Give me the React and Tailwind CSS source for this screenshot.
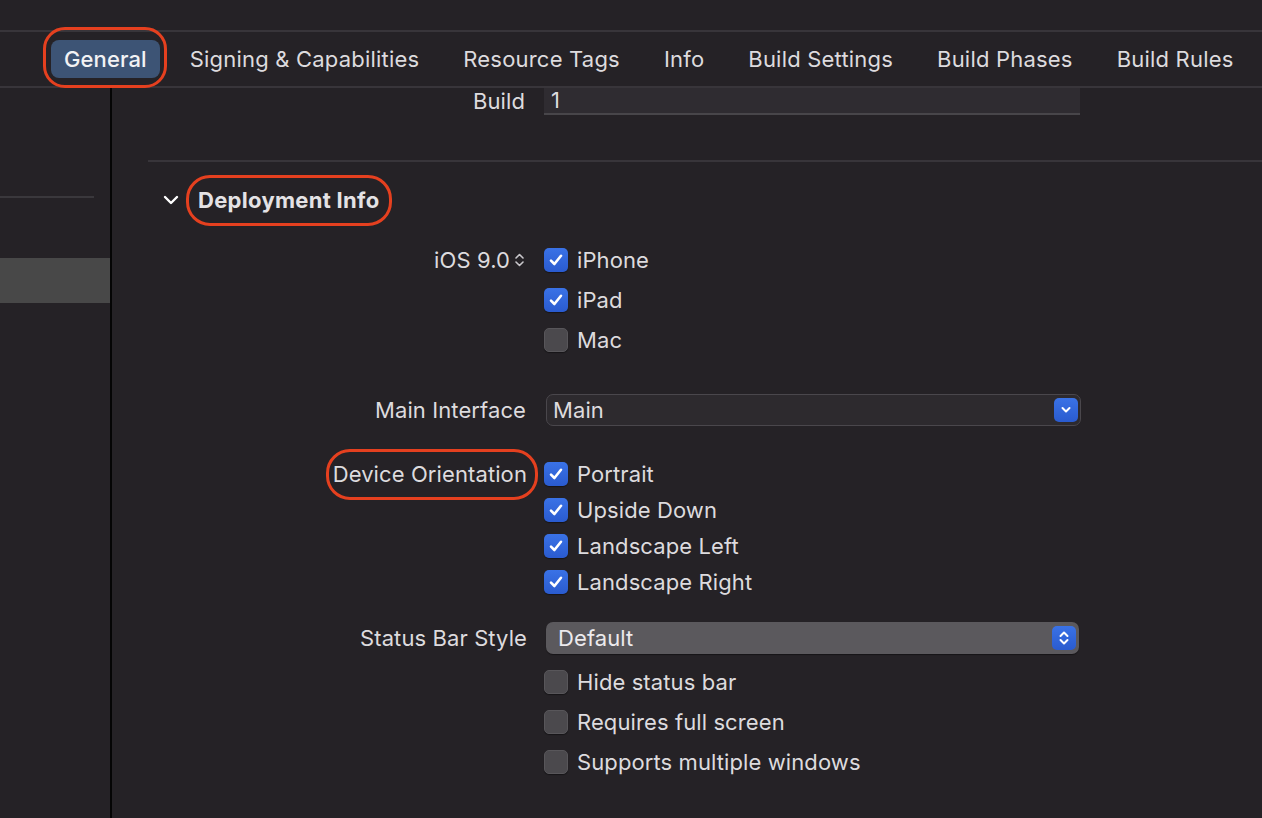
import React from "react";

const FONT = { fontFamily: "Inter, 'Noto Sans', 'Liberation Sans', sans-serif", letterSpacing: "0.1px" };

function Check({ on }) {
  if (on) {
    return (
      <div className="w-[24px] h-[24px] rounded-[5px] bg-gradient-to-b from-[#3a72e6] to-[#2a5bcf] flex items-center justify-center shrink-0 shadow-[0_1px_1px_rgba(0,0,0,0.4)]">
        <svg width="16" height="16" viewBox="0 0 16 16">
          <path d="M3 8.6 L6.4 12 L13 3.8" fill="none" stroke="#ffffff" strokeWidth="2.6" strokeLinecap="round" strokeLinejoin="round" />
        </svg>
      </div>
    );
  }
  return (
    <div className="w-[24px] h-[24px] rounded-[5px] bg-[#4b494d] border border-[#58565a] shrink-0 shadow-[0_1px_1px_rgba(0,0,0,0.4)]" />
  );
}

function CheckRow({ on, label, h = "h-[40px]" }) {
  return (
    <div className={`flex items-center ${h}`}>
      <div className="w-[432px]" />
      <Check on={on} />
      <span className="ml-[9px] text-[22px] text-[#dddbde]">{label}</span>
    </div>
  );
}

function Label({ children, className = "" }) {
  return (
    <div className={`w-[416px] flex justify-end items-center text-[22px] text-[#dddbde] ${className}`}>
      {children}
    </div>
  );
}

const tabs = [
  "Signing & Capabilities",
  "Resource Tags",
  "Info",
  "Build Settings",
  "Build Phases",
  "Build Rules",
];

export default function App() {
  return (
    <div className="w-[1262px] h-[818px] bg-[#252226] overflow-hidden flex flex-col" style={FONT}>
      {/* top strip */}
      <div className="h-[32px] shrink-0 border-b-2 border-[#38353a]" />
      {/* tab bar */}
      <div className="h-[56px] shrink-0 border-b-2 border-[#38353a] flex items-center pl-[51px]">
        <div className="relative">
          <div className="h-[38px] px-[13px] rounded-[8px] bg-[#3d5475] flex items-center text-[22px] text-[#f2f2f4] font-medium">
            General
          </div>
          <div className="absolute -left-[8px] -right-[7px] -top-[13px] -bottom-[10px] border-[3px] border-[#e5401f] rounded-[22px]" />
        </div>
        <div className="flex items-center gap-[44px] ml-[30px] text-[22px] text-[#dddbde]" style={{ letterSpacing: "0.2px" }}>
          {tabs.map((t) => (
            <span key={t}>{t}</span>
          ))}
        </div>
      </div>

      {/* body */}
      <div className="flex flex-1 min-h-0">
        {/* sidebar */}
        <div className="w-[112px] shrink-0 border-r-2 border-[#050505] flex flex-col">
          <div className="mt-[108px] h-[2px] w-[94px] bg-[#3a383c]" />
          <div className="mt-[60px] h-[45px] bg-[#484848]" />
        </div>

        {/* content */}
        <div className="flex-1 flex flex-col">
          {/* Build row */}
          <div className="flex items-center h-[27px]">
            <Label className="pr-[3px]">Build</Label>
            <div className="ml-[16px] w-[536px] h-[27px] bg-[#2f2c31] border-b-2 border-[#48464a] flex items-center pl-[7px] text-[22px] text-[#dddbde]">
              1
            </div>
          </div>

          <div className="mt-[45px] ml-[36px] h-[2px] bg-[#38353a]" />

          {/* Deployment header */}
          <div className="mt-[18px] h-[40px] flex items-center pl-[51px]">
            <svg width="16" height="10" viewBox="0 0 16 10">
              <path d="M2 2 L8 8 L14 2" fill="none" stroke="#ffffff" strokeWidth="2.4" strokeLinecap="round" strokeLinejoin="round" />
            </svg>
            <div className="relative ml-[19px]">
              <span className="text-[22px] font-bold text-[#e4e2e5]" style={{ letterSpacing: "0.3px" }}>Deployment Info</span>
              <div className="absolute -left-[12px] -right-[13px] -top-[9px] -bottom-[9px] border-[3px] border-[#e5401f] rounded-[24px]" />
            </div>
          </div>

          {/* iOS row */}
          <div className="mt-[20px] flex items-center h-[40px]">
            <Label className="pr-[3px]">
              <span>iOS 9.0</span>
              <svg className="ml-[4px]" width="11" height="18" viewBox="0 0 11 18">
                <path d="M2 7 L5.5 3.5 L9 7 M2 11 L5.5 14.5 L9 11" fill="none" stroke="#c9c7cb" strokeWidth="1.6" strokeLinecap="round" strokeLinejoin="round" />
              </svg>
            </Label>
            <div className="ml-[16px]"><Check on /></div>
            <span className="ml-[9px] text-[22px] text-[#dddbde]">iPhone</span>
          </div>
          <CheckRow on label="iPad" />
          <CheckRow on={false} label="Mac" />

          {/* Main interface */}
          <div className="mt-[34px] flex items-center h-[32px]">
            <Label className="pr-[2px]">Main Interface</Label>
            <div className="ml-[18px] w-[535px] h-[32px] rounded-[7px] bg-[#2d2a2e] border border-[#4a474c] flex items-center justify-between pl-[6px] pr-[2px]">
              <span className="text-[22px] text-[#dddbde]">Main</span>
              <div className="w-[24px] h-[24px] rounded-[5px] bg-gradient-to-b from-[#3a72e6] to-[#2a5bcf] flex items-center justify-center">
                <svg width="12" height="8" viewBox="0 0 12 8">
                  <path d="M2.5 2 L6 5.5 L9.5 2" fill="none" stroke="#ffffff" strokeWidth="2" strokeLinecap="round" strokeLinejoin="round" />
                </svg>
              </div>
            </div>
          </div>

          {/* Device orientation */}
          <div className="mt-[30px] flex items-center h-[36px]">
            <Label className="pr-[1px]">
              <div className="relative">
                <span>Device Orientation</span>
                <div className="absolute -left-[7px] -right-[11px] -top-[9px] -bottom-[9px] border-[3px] border-[#e5401f] rounded-[24px]" />
              </div>
            </Label>
            <div className="ml-[16px]"><Check on /></div>
            <span className="ml-[9px] text-[22px] text-[#dddbde]">Portrait</span>
          </div>
          <CheckRow on label="Upside Down" h="h-[36px]" />
          <CheckRow on label="Landscape Left" h="h-[36px]" />
          <CheckRow on label="Landscape Right" h="h-[36px]" />

          {/* Status bar style */}
          <div className="mt-[22px] flex items-center h-[32px]">
            <Label className="pr-[1px]">Status Bar Style</Label>
            <div className="ml-[18px] w-[533px] h-[32px] rounded-[7px] bg-[#5b595d] flex items-center justify-between pl-[12px] pr-[3px] shadow-[0_1px_1px_rgba(0,0,0,0.4)]">
              <span className="text-[22px] text-[#eceaed]">Default</span>
              <div className="w-[24px] h-[24px] rounded-[5px] bg-gradient-to-b from-[#3a72e6] to-[#2a5bcf] flex items-center justify-center">
                <svg width="12" height="18" viewBox="0 0 12 18">
                  <path d="M2.5 7 L6 3.5 L9.5 7 M2.5 11 L6 14.5 L9.5 11" fill="none" stroke="#ffffff" strokeWidth="2" strokeLinecap="round" strokeLinejoin="round" />
                </svg>
              </div>
            </div>
          </div>

          <div className="mt-[8px]">
            <CheckRow on={false} label="Hide status bar" />
            <CheckRow on={false} label="Requires full screen" />
            <CheckRow on={false} label="Supports multiple windows" />
          </div>
        </div>
      </div>
    </div>
  );
}
